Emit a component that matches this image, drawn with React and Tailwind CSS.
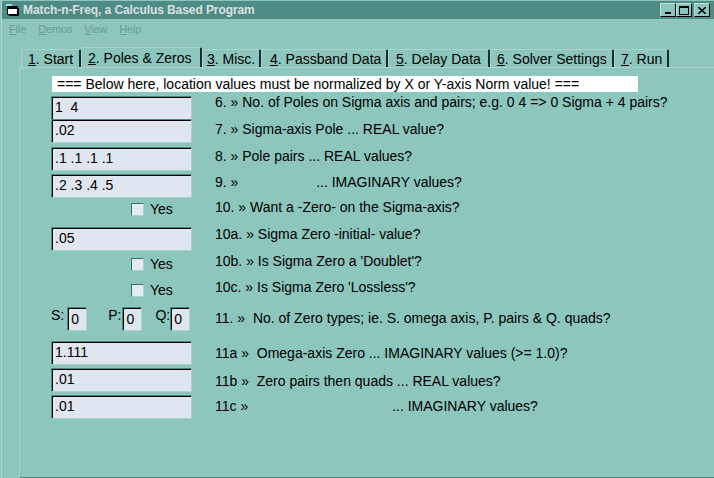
const tabs = [
  { n: '1', label: '. Start', w: 'w-[60px]', pad: 'pl-[6px]' },
  { n: '2', label: '. Poles & Zeros', w: 'w-[121px]', pad: 'pl-[6px]', active: true },
  { n: '3', label: '. Misc.', w: 'w-[59px]', pad: 'pl-[4px]' },
  { n: '4', label: '. Passband Data', w: 'w-[127px]', pad: 'pl-[8px]' },
  { n: '5', label: '. Delay Data', w: 'w-[102px]', pad: 'pl-[7px]' },
  { n: '6', label: '. Solver Settings', w: 'w-[124px]', pad: 'pl-[6px]' },
  { n: '7', label: '. Run', w: 'w-[55px]', pad: 'pl-[6px]' },
];

function Field({ value }) {
  return (
    <div className="h-[24px] w-[141px] shrink-0 border border-[#4d8a84] border-r-[#a9d3d3] border-b-[#a9d3d3] bg-[#e0e6f0]">
      <div className="h-full whitespace-pre border-t border-l border-black pl-[2px] text-[14px] leading-[18px] text-black">{value}</div>
    </div>
  );
}

function MiniField({ value }) {
  return (
    <div className="h-[24px] w-[20px] shrink-0 border border-[#4d8a84] border-r-[#a9d3d3] border-b-[#a9d3d3] bg-[#e0e6f0]">
      <div className="h-full border-t border-l border-black pl-[2px] text-[14px] leading-[21px] text-black">{value}</div>
    </div>
  );
}

function Check() {
  return (
    <div className="-mt-[2px] ml-[80px] flex items-center gap-[6px]">
      <div className="h-[13px] w-[13px] border border-[#3d6f6a] border-r-[#a9d3d3] border-b-[#a9d3d3] bg-[#e4ebf0]" />
      <span className="text-[14px] leading-[16px] text-black">Yes</span>
    </div>
  );
}

function Row({ className, labelClass, label, children }) {
  return (
    <div className={`flex ${className}`}>
      <div className="w-[164px] shrink-0">{children}</div>
      <div className={`whitespace-pre text-[14px] leading-[16px] text-black ${labelClass}`}>{label}</div>
    </div>
  );
}

export default function App() {
  return (
    <div className="h-[478px] w-[714px] overflow-hidden bg-[#8cc6bc] pl-px font-['Liberation_Sans',Arial,sans-serif]">
      <div className="flex h-full flex-col border-l border-[#a9d3d3]">
        <div className="mt-px flex h-[18px] items-center justify-between bg-[#4f8c85] pl-[4px] pr-[4px]">
          <div className="flex items-center gap-[4px]">
            <svg width="13" height="12" viewBox="0 0 13 12">
              <path d="M0 0H6V2H0Z" fill="#7fe8e8" />
              <path d="M1.5 2.5H11.5V10.5H1.5Z" fill="#fff" stroke="#000" />
              <path d="M2 3H11V5H2Z" fill="#000" />
              <path d="M3 11.5H12.5V4" fill="none" stroke="#000" />
            </svg>
            <span className="text-[12px] font-bold leading-[18px] tracking-[-0.08px] text-[#dce0e0]">Match-n-Freq, a Calculus Based Program</span>
          </div>
          <div className="flex">
            <div className="flex h-[14px] w-[16px] items-end border border-[#c4e2dc] border-r-black border-b-black bg-[#8cc6bc] pb-[2px] pl-[4px]">
              <div className="h-[2px] w-[6px] bg-black" />
            </div>
            <div className="flex h-[14px] w-[16px] items-center justify-center border border-[#c4e2dc] border-r-black border-b-black bg-[#8cc6bc]">
              <div className="h-[9px] w-[10px] border border-t-2 border-black" />
            </div>
            <div className="ml-[2px] flex h-[14px] w-[16px] items-center justify-center border border-[#c4e2dc] border-r-black border-b-black bg-[#8cc6bc]">
              <svg width="8" height="7" viewBox="0 0 8 7">
                <path d="M0 0L8 7M8 0L0 7" stroke="#000" strokeWidth="1.5" />
              </svg>
            </div>
          </div>
        </div>

        <div className="flex h-[20px] items-center gap-[12px] pl-[7px] text-[11px] leading-[20px] tracking-[-0.15px] text-[#6a9c96]">
          <span><u>F</u>ile</span>
          <span><u>D</u>emos</span>
          <span><u>V</u>iew</span>
          <span><u>H</u>elp</span>
        </div>

        <div className="ml-[19px] mt-[9px] flex h-[19px] items-end">
          {tabs.map((t) => (
            <div
              key={t.n}
              className={`${t.w} ${t.pad} shrink-0 whitespace-nowrap rounded-t-[2px] border-t border-l border-[#a9d3d3] border-r-2 border-r-[#1c2c2a] text-[14px] text-black ${t.active ? 'h-[20px] leading-[20px]' : 'h-[18px] leading-[18px]'}`}
            >
              <u>{t.n}</u>{t.label}
            </div>
          ))}
        </div>

        <div className="ml-[17px] flex min-h-0 flex-1 flex-col border-t border-l border-b border-[#a9d3d3] border-b-[#4d8a84] pl-[31px]">
          <div className="ml-[1px] mt-[8px] h-[16px] w-[586px] bg-white pl-[5px] text-[14px] leading-[16px] text-black">
            === Below here, location values must be normalized by X or Y-axis Norm value! ===
          </div>
          <Row className="mt-[4px] h-[23px]" labelClass="-mt-[2px]" label="6. » No. of Poles on Sigma axis and pairs; e.g. 0 4 => 0 Sigma + 4 pairs?"><Field value="1  4" /></Row>
          <Row className="h-[28px]" labelClass="mt-[2px]" label="7. » Sigma-axis Pole ... REAL value?"><Field value=".02" /></Row>
          <Row className="h-[27px]" labelClass="mt-[1px]" label="8. » Pole pairs ... REAL values?"><Field value=".1 .1 .1 .1" /></Row>
          <Row className="h-[29px]" labelClass="" label="9. »                    ... IMAGINARY values?"><Field value=".2 .3 .4 .5" /></Row>
          <Row className="h-[24px]" labelClass="-mt-[4px]" label="10. » Want a -Zero- on the Sigma-axis?"><Check /></Row>
          <Row className="h-[31px]" labelClass="-mt-[1px]" label="10a. » Sigma Zero -initial- value?"><Field value=".05" /></Row>
          <Row className="h-[26px]" labelClass="-mt-[5px]" label="10b. » Is Sigma Zero a 'Doublet'?"><Check /></Row>
          <Row className="h-[23px]" labelClass="-mt-[5px]" label="10c. » Is Sigma Zero 'Lossless'?"><Check /></Row>
          <Row className="h-[34px]" labelClass="mt-[3px]" label="11. »  No. of Zero types; ie. S. omega axis, P. pairs & Q. quads?">
            <div className="flex w-[141px] items-start text-[14px] leading-[16px] text-black">
              <span className="mr-[3px]">S:</span>
              <MiniField value="0" />
              <span className="ml-[21px] mr-[1px]">P:</span>
              <MiniField value="0" />
              <span className="ml-[13px]">Q:</span>
              <MiniField value="0" />
            </div>
          </Row>
          <Row className="h-[27px]" labelClass="mt-[4px]" label="11a »  Omega-axis Zero ... IMAGINARY values (>= 1.0)?"><Field value="1.111" /></Row>
          <Row className="h-[27px]" labelClass="mt-[5px]" label="11b »  Zero pairs then quads ... REAL values?"><Field value=".01" /></Row>
          <Row className="h-[27px]" labelClass="mt-[3px]" label="11c »                                     ... IMAGINARY values?"><Field value=".01" /></Row>
        </div>
      </div>
    </div>
  );
}
